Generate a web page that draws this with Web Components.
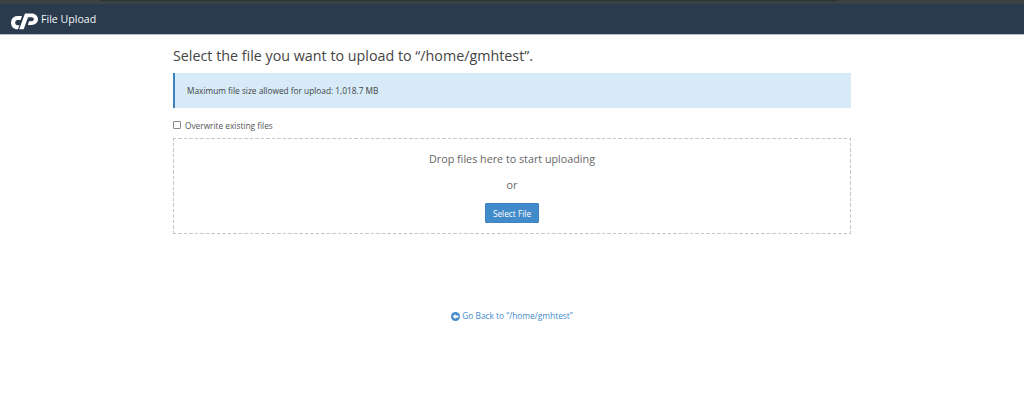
<!DOCTYPE html>
<html>
<head>
<meta charset="utf-8">
<style>
  html, body { margin: 0; padding: 0; background: #fff; }
  body { font-family: "Open Sans", sans-serif; color: #333; }
</style>
</head>
<body>
<file-manager-bar title-text="File Upload"></file-manager-bar>
<upload-page path="/home/gmhtest" limit="1,018.7 MB"></upload-page>

<script>
class FileManagerBar extends HTMLElement {
  connectedCallback() {
    const root = this.attachShadow({ mode: "open" });
    root.innerHTML = `
      <style>
        :host { display: block; }
        .strip { height: 4px; background: #3a4243; border-bottom: 1px solid #3d4345; box-sizing: border-box; }
        .strip div { height: 1px; margin: 0 186px 0 100px; background: #2b3536; }
        .bar {
          height: 30px;
          background: #2a3b4d;
          border-bottom: 1px solid #b6bec8;
          display: flex;
          align-items: center;
          padding-left: 11px;
          color: #f4f6f8;
          font-size: 10.6px;
          gap: 2px;
        }
        svg { width: 28px; height: 30px; display: block; }
        span { position: relative; top: -0.5px; }
      </style>
      <div class="strip"><div></div></div>
      <div class="bar">
        <svg viewBox="0 0 28 30" fill="#fff">
          <path d="M11 12H6.500C2.500 12 0 15 0 18.800S2.500 25.300 6.500 25.300H7L8.400 21.300H6.500C5 21.300 4.200 20 4.200 18.800S5 16 6.500 16H9.600Z"/>
          <path d="M14 9.500H20.500C24.200 9.500 27 12 27 15.300S24.200 21 20.500 21H16.800L18.100 17.200H20.400C21.800 17.200 22.800 16.400 22.800 15.200S21.800 13.300 20.400 13.300H17L12.700 25.300H8.200L12.600 13.300Z"/>
        </svg>
        <span>${this.getAttribute("title-text")}</span>
      </div>`;
  }
}

class InfoAlert extends HTMLElement {
  connectedCallback() {
    const root = this.attachShadow({ mode: "open" });
    root.innerHTML = `
      <style>
        :host {
          display: flex;
          align-items: center;
          height: 35px;
          background: #d6eaf8;
          border-left: 2px solid #3c80bc;
          padding-left: 12px;
          font-size: 8.3px;
          color: #444;
        }
      </style>
      <slot></slot>`;
  }
}

class DropZone extends HTMLElement {
  connectedCallback() {
    const root = this.attachShadow({ mode: "open" });
    root.innerHTML = `
      <style>
        :host {
          --dash: #c6c6c6;
          display: flex;
          flex-direction: column;
          align-items: center;
          height: 96px;
          box-sizing: border-box;
          color: #666;
          font-size: 10.75px;
          padding-top: 14px;
          background:
            repeating-linear-gradient(90deg, var(--dash) 0 3.500px, transparent 3.500px 5.500px) top / 100% 1px no-repeat,
            repeating-linear-gradient(90deg, var(--dash) 0 3.500px, transparent 3.500px 5.500px) bottom / 100% 1px no-repeat,
            repeating-linear-gradient(0deg, var(--dash) 0 3.500px, transparent 3.500px 5.500px) left / 1px 100% no-repeat,
            repeating-linear-gradient(0deg, var(--dash) 0 3.500px, transparent 3.500px 5.500px) right / 1px 100% no-repeat;
        }
        .drop { line-height: 15px; }
        .or { line-height: 15px; margin-top: 11px; }
        button {
          margin-top: 10px;
          height: 20px;
          width: 54px;
          padding: 0;
          border: 1px solid #3f84c0;
          border-radius: 1px;
          background: #428bca;
          color: #fff;
          font: 8.3px "Open Sans", sans-serif;
        }
      </style>
      <div class="drop">Drop files here to start uploading</div>
      <div class="or">or</div>
      <button type="button">Select File</button>`;
  }
}

class UploadPage extends HTMLElement {
  connectedCallback() {
    const path = this.getAttribute("path");
    const root = this.attachShadow({ mode: "open" });
    root.innerHTML = `
      <style>
        :host { display: block; width: 678px; margin: 0 0 0 173px; color: #333; }
        h1 { margin: 0; padding-top: 10px; font-size: 14.3px; line-height: 21px; font-weight: 400; color: #444; }
        info-alert { margin-top: 7px; }
        label {
          display: flex;
          align-items: center;
          height: 14px;
          margin-top: 10px;
          font-size: 8.3px;
          color: #555;
          gap: 4px;
        }
        input {
          appearance: none;
          margin: 0;
          width: 8px;
          height: 8px;
          background: #fff;
          border: 1px solid #888;
          border-radius: 1px;
        }
        drop-zone { margin-top: 6px; }
        .back {
          display: flex;
          justify-content: center;
          align-items: center;
          gap: 2px;
          margin-top: 76px;
          font-size: 8.35px;
          line-height: 12px;
          color: #428bca;
          text-decoration: none;
        }
        .back svg { width: 9px; height: 9px; display: block; }
      </style>
      <h1>Select the file you want to upload to “${path}”.</h1>
      <info-alert>Maximum file size allowed for upload: ${this.getAttribute("limit")}</info-alert>
      <label><input type="checkbox">Overwrite existing files</label>
      <drop-zone></drop-zone>
      <a class="back" href="#">
        <svg viewBox="0 0 16 16"><circle cx="8" cy="8" r="8" fill="#428bca"/><path d="M8 3 3 8 8 13V10H13V6H8Z" fill="#fff"/></svg>
        <span>Go Back to “${path}”</span>
      </a>`;
  }
}

customElements.define("file-manager-bar", FileManagerBar);
customElements.define("info-alert", InfoAlert);
customElements.define("drop-zone", DropZone);
customElements.define("upload-page", UploadPage);
</script>
</body>
</html>
